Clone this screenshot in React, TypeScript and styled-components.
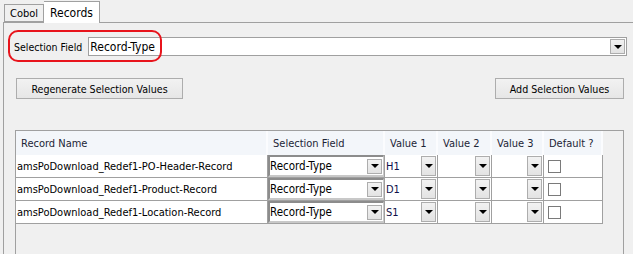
import React from "react";
import styled, { createGlobalStyle } from "styled-components";

const GlobalStyle = createGlobalStyle`
  html, body {
    margin: 0;
    padding: 0;
    background: #f0f0f0;
  }
  body {
    font-family: "DejaVu Sans Condensed", "DejaVu Sans", sans-serif;
    font-size: 11px;
    color: #000;
  }
`;

const colors = {
  bg: "#f0f0f0",
  frame: "#a0a0a0",
  grid: "#a0a0a0",
  header: "#f3f6fa",
  headerText: "#1c2536",
  button: "#adadad",
};

const Window = styled.div`
  position: relative;
  width: 633px;
  height: 254px;
  overflow: hidden;
  background: ${colors.bg};
  padding-left: 3px;
  box-sizing: border-box;
  display: flex;
  flex-direction: column;
`;

const TabStrip = styled.div`
  display: flex;
  align-items: flex-end;
  height: 22px;
  padding-left: 1px;
  border-bottom: 1px solid ${colors.frame};
`;

const Tab = styled.div<{ $active?: boolean }>`
  box-sizing: border-box;
  height: ${(p) => (p.$active ? "22px" : "18px")};
  margin-bottom: ${(p) => (p.$active ? "-1px" : "0")};
  padding: 0 ${(p) => (p.$active ? "6px" : "5px")};
  display: flex;
  align-items: center;
  font-size: ${(p) => (p.$active ? "12px" : "11px")};
  background: ${(p) => (p.$active ? "#fff" : "#f0f0f0")};
  border: 1px solid ${colors.frame};
  border-bottom: ${(p) => (p.$active ? "none" : `1px solid ${colors.frame}`)};
  border-left: ${(p) => (p.$active ? "none" : `1px solid ${colors.frame}`)};
  position: relative;
  z-index: ${(p) => (p.$active ? 1 : 0)};
`;

const Panel = styled.div`
  flex: 1;
  border-left: 1px solid ${colors.frame};
  display: flex;
  flex-direction: column;
`;

const FieldRow = styled.div`
  display: flex;
  align-items: center;
  padding: 14px 6px 0 10px;
  gap: 6px;
`;

const Label = styled.span`
  font-size: 10.5px;
  white-space: nowrap;
`;

const Combo = styled.div`
  flex: 1;
  height: 19px;
  box-sizing: border-box;
  background: #fff;
  border: 1px solid ${colors.frame};
  display: flex;
  align-items: center;
  padding-left: 1px;
  font-size: 12px;
`;

const ComboText = styled.span`
  flex: 1;
`;

const DropButton = styled.div<{ $tall?: boolean }>`
  width: 15px;
  height: ${(p) => (p.$tall ? "20px" : "15px")};
  box-sizing: border-box;
  margin-right: 1px;
  background: linear-gradient(#f2f2f2, #e3e3e3);
  border: 1px solid ${colors.button};
  display: flex;
  align-items: center;
  justify-content: center;
  flex-shrink: 0;
`;

const Arrow = styled.span`
  width: 0;
  height: 0;
  border-left: 4px solid transparent;
  border-right: 4px solid transparent;
  border-top: 4px solid #000;
`;

const ButtonRow = styled.div`
  display: flex;
  justify-content: space-between;
  padding: 22px 9px 0 12px;
`;

const Button = styled.div<{ $width: number }>`
  width: ${(p) => p.$width}px;
  height: 21px;
  box-sizing: border-box;
  border: 1px solid ${colors.button};
  background: linear-gradient(#f2f2f2, #e6e6e6);
  display: flex;
  align-items: center;
  justify-content: center;
  font-size: 10.6px;
`;

const Table = styled.div`
  margin: 31px 9px 0 11px;
  flex: 1;
  border: 1px solid ${colors.frame};
  border-bottom: none;
  background: ${colors.bg};
`;

const HeaderRow = styled.div`
  display: flex;
  height: 24px;
`;

const HeaderCell = styled.div<{ $w: number }>`
  width: ${(p) => p.$w}px;
  box-sizing: border-box;
  background: ${colors.header};
  border-right: 2px solid #fbfcfe;
  color: ${colors.headerText};
  font-size: 11px;
  display: flex;
  align-items: center;
  padding-left: 5px;
  white-space: nowrap;
`;

const Row = styled.div`
  display: flex;
  height: 23px;
`;

const Cell = styled.div<{ $w: number }>`
  width: ${(p) => p.$w}px;
  box-sizing: border-box;
  background: #fff;
  border-right: 1px solid ${colors.grid};
  border-bottom: 1px solid ${colors.grid};
  display: flex;
  align-items: center;
  font-size: 11px;
  white-space: nowrap;
  overflow: hidden;
`;

const CellText = styled.span<{ $navy?: boolean }>`
  flex: 1;
  padding-left: 1px;
  color: ${(p) => (p.$navy ? "#10104a" : "#000")};
`;

const CellCombo = styled.div`
  flex: 1;
  align-self: stretch;
  display: flex;
  align-items: center;
  border-top: 2px solid #8c8c8c;
  border-left: 2px solid #8c8c8c;
  border-bottom: 2px solid #c8c8c8;
  border-right: 1px solid #c8c8c8;
  font-size: 11.5px;
`;

const Check = styled.span`
  width: 13px;
  height: 13px;
  box-sizing: border-box;
  margin-left: 4px;
  border: 1px solid #7a7a7a;
  background: #fff;
`;

const Highlight = styled.div`
  position: absolute;
  left: 8px;
  top: 30px;
  width: 154px;
  height: 32px;
  box-sizing: border-box;
  border: 2px solid #e8141c;
  border-radius: 10px;
  pointer-events: none;
`;

const widths = [252, 117, 53, 54, 52, 59];
const headers = ["Record Name", "Selection Field", "Value 1", "Value 2", "Value 3", "Default ?"];

const records = [
  { name: "amsPoDownload_Redef1-PO-Header-Record", value: "H1" },
  { name: "amsPoDownload_Redef1-Product-Record", value: "D1" },
  { name: "amsPoDownload_Redef1-Location-Record", value: "S1" },
];

const ValueCell = ({ w, text }: { w: number; text?: string }) => (
  <Cell $w={w}>
    <CellText $navy>{text}</CellText>
    <DropButton $tall>
      <Arrow />
    </DropButton>
  </Cell>
);

export default function App() {
  return (
    <Window>
      <GlobalStyle />
      <TabStrip>
        <Tab>Cobol</Tab>
        <Tab $active>Records</Tab>
      </TabStrip>
      <Panel>
        <FieldRow>
          <Label>Selection Field</Label>
          <Combo>
            <ComboText>Record-Type</ComboText>
            <DropButton>
              <Arrow />
            </DropButton>
          </Combo>
        </FieldRow>
        <ButtonRow>
          <Button $width={167}>Regenerate Selection Values</Button>
          <Button $width={129}>Add Selection Values</Button>
        </ButtonRow>
        <Table>
          <HeaderRow>
            {headers.map((h, i) => (
              <HeaderCell key={h} $w={widths[i]}>
                {h}
              </HeaderCell>
            ))}
          </HeaderRow>
          {records.map((r) => (
            <Row key={r.name}>
              <Cell $w={widths[0]}>
                <CellText>{r.name}</CellText>
              </Cell>
              <Cell $w={widths[1]}>
                <CellCombo>
                  <ComboText>Record-Type</ComboText>
                  <DropButton>
                    <Arrow />
                  </DropButton>
                </CellCombo>
              </Cell>
              <ValueCell w={widths[2]} text={r.value} />
              <ValueCell w={widths[3]} />
              <ValueCell w={widths[4]} />
              <Cell $w={widths[5]}>
                <Check />
              </Cell>
            </Row>
          ))}
        </Table>
      </Panel>
      <Highlight />
    </Window>
  );
}
